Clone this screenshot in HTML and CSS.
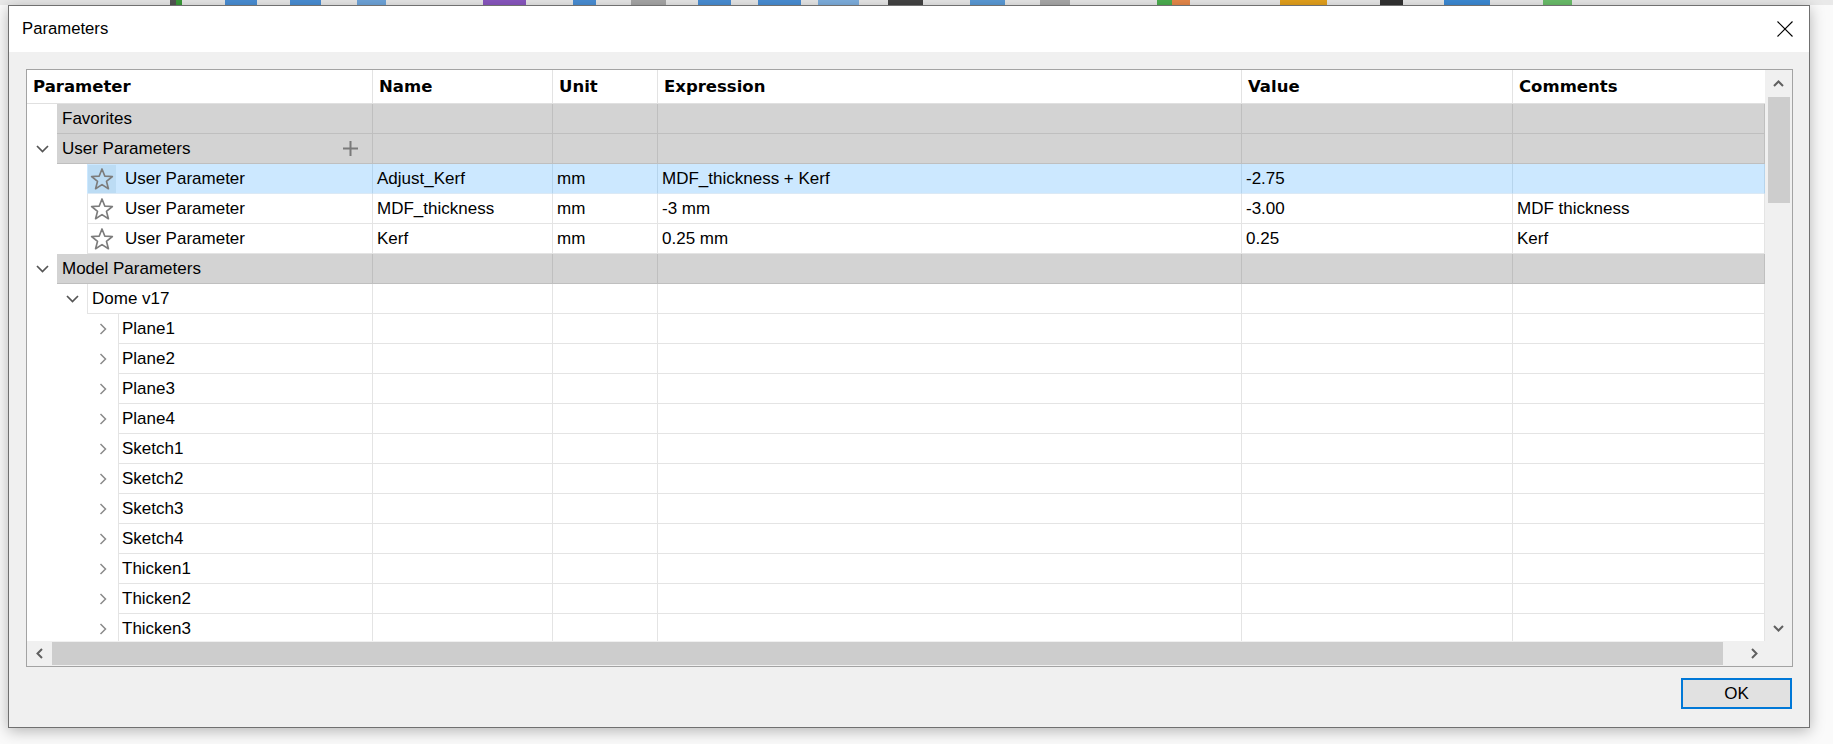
FILE: index.html
```html
<!DOCTYPE html>
<html>
<head>
<meta charset="utf-8">
<title>Parameters</title>
<link rel="stylesheet" href="styles.css">
</head>
<body>
<div class="topstrip"></div>
<div class="dialog">
  <div class="titlebar">
    <span class="title">Parameters</span>
    <svg class="close" width="16" height="16" viewBox="0 0 16 16"><path d="M0.5 0.5 L15.5 15.5 M15.5 0.5 L0.5 15.5" stroke="#000" stroke-width="1.1" fill="none"/></svg>
  </div>
  <div class="dbody">
    <div class="frame">
      <div class="viewport">
        <div class="content">
          <div class="row head">
            <div class="hc w-param">Parameter</div>
            <div class="hc w-name">Name</div>
            <div class="hc w-unit">Unit</div>
            <div class="hc w-expr">Expression</div>
            <div class="hc w-val">Value</div>
            <div class="hc w-com">Comments</div>
          </div>

          <div class="row group">
            <div class="c-param"><div class="indent i1"></div><div class="tbox">Favorites</div></div>
            <div class="cell w-name"></div><div class="cell w-unit"></div><div class="cell w-expr"></div><div class="cell w-val"></div><div class="cell w-com"></div>
          </div>

          <div class="row group">
            <div class="c-param"><div class="indent i1"><span class="chev"><svg width="13" height="8" viewBox="0 0 13 8"><path d="M1 1 L6.5 6.5 L12 1" fill="none" stroke="#555" stroke-width="1.7"/></svg></span></div><div class="tbox">User Parameters<svg class="plus" width="15" height="15" viewBox="0 0 15 15"><path d="M7.5 0 V15 M0 7.5 H15" stroke="#7a7a7a" stroke-width="2"/></svg></div></div>
            <div class="cell w-name"></div><div class="cell w-unit"></div><div class="cell w-expr"></div><div class="cell w-val"></div><div class="cell w-com"></div>
          </div>

          <div class="row leaf sel">
            <div class="c-param"><div class="indent i2"></div><div class="tbox"><span class="starbox"><svg width="24" height="24" viewBox="0 0 22 22"><path d="M11 1.8 L13.53 8.32 L20.51 8.71 L15.09 13.13 L16.88 19.89 L11 16.1 L5.12 19.89 L6.91 13.13 L1.49 8.71 L8.47 8.32 Z" fill="none" stroke="#7c7c7c" stroke-width="1.5" stroke-linejoin="round"/></svg></span><span class="utx">User Parameter</span></div></div>
            <div class="cell w-name">Adjust_Kerf</div><div class="cell w-unit">mm</div><div class="cell w-expr">MDF_thickness + Kerf</div><div class="cell w-val">-2.75</div><div class="cell w-com"></div>
          </div>

          <div class="row leaf">
            <div class="c-param"><div class="indent i2"></div><div class="tbox"><span class="starbox"><svg width="24" height="24" viewBox="0 0 22 22"><path d="M11 1.8 L13.53 8.32 L20.51 8.71 L15.09 13.13 L16.88 19.89 L11 16.1 L5.12 19.89 L6.91 13.13 L1.49 8.71 L8.47 8.32 Z" fill="none" stroke="#7c7c7c" stroke-width="1.5" stroke-linejoin="round"/></svg></span><span class="utx">User Parameter</span></div></div>
            <div class="cell w-name">MDF_thickness</div><div class="cell w-unit">mm</div><div class="cell w-expr">-3 mm</div><div class="cell w-val">-3.00</div><div class="cell w-com">MDF thickness</div>
          </div>

          <div class="row leaf">
            <div class="c-param"><div class="indent i2"></div><div class="tbox"><span class="starbox"><svg width="24" height="24" viewBox="0 0 22 22"><path d="M11 1.8 L13.53 8.32 L20.51 8.71 L15.09 13.13 L16.88 19.89 L11 16.1 L5.12 19.89 L6.91 13.13 L1.49 8.71 L8.47 8.32 Z" fill="none" stroke="#7c7c7c" stroke-width="1.5" stroke-linejoin="round"/></svg></span><span class="utx">User Parameter</span></div></div>
            <div class="cell w-name">Kerf</div><div class="cell w-unit">mm</div><div class="cell w-expr">0.25 mm</div><div class="cell w-val">0.25</div><div class="cell w-com">Kerf</div>
          </div>

          <div class="row group">
            <div class="c-param"><div class="indent i1"><span class="chev"><svg width="13" height="8" viewBox="0 0 13 8"><path d="M1 1 L6.5 6.5 L12 1" fill="none" stroke="#555" stroke-width="1.7"/></svg></span></div><div class="tbox">Model Parameters</div></div>
            <div class="cell w-name"></div><div class="cell w-unit"></div><div class="cell w-expr"></div><div class="cell w-val"></div><div class="cell w-com"></div>
          </div>

          <div class="row leaf">
            <div class="c-param"><div class="indent i2"><span class="chev"><svg width="13" height="8" viewBox="0 0 13 8"><path d="M1 1 L6.5 6.5 L12 1" fill="none" stroke="#555" stroke-width="1.7"/></svg></span></div><div class="tbox">Dome v17</div></div>
            <div class="cell w-name"></div><div class="cell w-unit"></div><div class="cell w-expr"></div><div class="cell w-val"></div><div class="cell w-com"></div>
          </div>

          <div class="row leaf">
            <div class="c-param"><div class="indent i3"><span class="chev"><svg width="8" height="12" viewBox="0 0 8 12"><path d="M1.5 1 L6.5 6 L1.5 11" fill="none" stroke="#8a8a8a" stroke-width="1.5"/></svg></span></div><div class="tbox t3">Plane1</div></div>
            <div class="cell w-name"></div><div class="cell w-unit"></div><div class="cell w-expr"></div><div class="cell w-val"></div><div class="cell w-com"></div>
          </div>
          <div class="row leaf">
            <div class="c-param"><div class="indent i3"><span class="chev"><svg width="8" height="12" viewBox="0 0 8 12"><path d="M1.5 1 L6.5 6 L1.5 11" fill="none" stroke="#8a8a8a" stroke-width="1.5"/></svg></span></div><div class="tbox t3">Plane2</div></div>
            <div class="cell w-name"></div><div class="cell w-unit"></div><div class="cell w-expr"></div><div class="cell w-val"></div><div class="cell w-com"></div>
          </div>
          <div class="row leaf">
            <div class="c-param"><div class="indent i3"><span class="chev"><svg width="8" height="12" viewBox="0 0 8 12"><path d="M1.5 1 L6.5 6 L1.5 11" fill="none" stroke="#8a8a8a" stroke-width="1.5"/></svg></span></div><div class="tbox t3">Plane3</div></div>
            <div class="cell w-name"></div><div class="cell w-unit"></div><div class="cell w-expr"></div><div class="cell w-val"></div><div class="cell w-com"></div>
          </div>
          <div class="row leaf">
            <div class="c-param"><div class="indent i3"><span class="chev"><svg width="8" height="12" viewBox="0 0 8 12"><path d="M1.5 1 L6.5 6 L1.5 11" fill="none" stroke="#8a8a8a" stroke-width="1.5"/></svg></span></div><div class="tbox t3">Plane4</div></div>
            <div class="cell w-name"></div><div class="cell w-unit"></div><div class="cell w-expr"></div><div class="cell w-val"></div><div class="cell w-com"></div>
          </div>
          <div class="row leaf">
            <div class="c-param"><div class="indent i3"><span class="chev"><svg width="8" height="12" viewBox="0 0 8 12"><path d="M1.5 1 L6.5 6 L1.5 11" fill="none" stroke="#8a8a8a" stroke-width="1.5"/></svg></span></div><div class="tbox t3">Sketch1</div></div>
            <div class="cell w-name"></div><div class="cell w-unit"></div><div class="cell w-expr"></div><div class="cell w-val"></div><div class="cell w-com"></div>
          </div>
          <div class="row leaf">
            <div class="c-param"><div class="indent i3"><span class="chev"><svg width="8" height="12" viewBox="0 0 8 12"><path d="M1.5 1 L6.5 6 L1.5 11" fill="none" stroke="#8a8a8a" stroke-width="1.5"/></svg></span></div><div class="tbox t3">Sketch2</div></div>
            <div class="cell w-name"></div><div class="cell w-unit"></div><div class="cell w-expr"></div><div class="cell w-val"></div><div class="cell w-com"></div>
          </div>
          <div class="row leaf">
            <div class="c-param"><div class="indent i3"><span class="chev"><svg width="8" height="12" viewBox="0 0 8 12"><path d="M1.5 1 L6.5 6 L1.5 11" fill="none" stroke="#8a8a8a" stroke-width="1.5"/></svg></span></div><div class="tbox t3">Sketch3</div></div>
            <div class="cell w-name"></div><div class="cell w-unit"></div><div class="cell w-expr"></div><div class="cell w-val"></div><div class="cell w-com"></div>
          </div>
          <div class="row leaf">
            <div class="c-param"><div class="indent i3"><span class="chev"><svg width="8" height="12" viewBox="0 0 8 12"><path d="M1.5 1 L6.5 6 L1.5 11" fill="none" stroke="#8a8a8a" stroke-width="1.5"/></svg></span></div><div class="tbox t3">Sketch4</div></div>
            <div class="cell w-name"></div><div class="cell w-unit"></div><div class="cell w-expr"></div><div class="cell w-val"></div><div class="cell w-com"></div>
          </div>
          <div class="row leaf">
            <div class="c-param"><div class="indent i3"><span class="chev"><svg width="8" height="12" viewBox="0 0 8 12"><path d="M1.5 1 L6.5 6 L1.5 11" fill="none" stroke="#8a8a8a" stroke-width="1.5"/></svg></span></div><div class="tbox t3">Thicken1</div></div>
            <div class="cell w-name"></div><div class="cell w-unit"></div><div class="cell w-expr"></div><div class="cell w-val"></div><div class="cell w-com"></div>
          </div>
          <div class="row leaf">
            <div class="c-param"><div class="indent i3"><span class="chev"><svg width="8" height="12" viewBox="0 0 8 12"><path d="M1.5 1 L6.5 6 L1.5 11" fill="none" stroke="#8a8a8a" stroke-width="1.5"/></svg></span></div><div class="tbox t3">Thicken2</div></div>
            <div class="cell w-name"></div><div class="cell w-unit"></div><div class="cell w-expr"></div><div class="cell w-val"></div><div class="cell w-com"></div>
          </div>
          <div class="row leaf">
            <div class="c-param"><div class="indent i3"><span class="chev"><svg width="8" height="12" viewBox="0 0 8 12"><path d="M1.5 1 L6.5 6 L1.5 11" fill="none" stroke="#8a8a8a" stroke-width="1.5"/></svg></span></div><div class="tbox t3">Thicken3</div></div>
            <div class="cell w-name"></div><div class="cell w-unit"></div><div class="cell w-expr"></div><div class="cell w-val"></div><div class="cell w-com"></div>
          </div>
        </div>
        <div class="vscroll">
          <div class="sarrow"><svg width="11" height="7" viewBox="0 0 11 7"><path d="M1 6 L5.5 1.5 L10 6" fill="none" stroke="#606060" stroke-width="2"/></svg></div>
          <div class="vthumb"></div>
          <div class="vtrack"></div>
          <div class="sarrow"><svg width="11" height="7" viewBox="0 0 11 7"><path d="M1 1 L5.5 5.5 L10 1" fill="none" stroke="#606060" stroke-width="2"/></svg></div>
        </div>
      </div>
      <div class="hscroll">
        <div class="harrow"><svg width="7" height="11" viewBox="0 0 7 11"><path d="M6 1 L1.5 5.5 L6 10" fill="none" stroke="#606060" stroke-width="2"/></svg></div>
        <div class="hthumb"></div>
        <div class="htrack"></div>
        <div class="harrow hr"><svg width="7" height="11" viewBox="0 0 7 11"><path d="M1 1 L5.5 5.5 L1 10" fill="none" stroke="#606060" stroke-width="2"/></svg></div>
        <div class="corner"></div>
      </div>
    </div>
    <div class="footer">
      <button class="ok">OK</button>
    </div>
  </div>
</div>
</body>
</html>
```

FILE: styles.css
```css
* { box-sizing: border-box; }
html, body { margin: 0; padding: 0; }
body {
  width: 1833px;
  height: 744px;
  overflow: hidden;
  background: #fafafa;
  font-family: "Liberation Sans", Arial, sans-serif;
  color: #000;
}
.topstrip {
  height: 5px;
  background: linear-gradient(to right, #e9e9e9 0 170px, #555 170px 176px, #3b9c3b 176px 182px, #e9e9e9 182px 225px, #4a8fd6 225px 257px, #e9e9e9 257px 290px, #4a8fd6 290px 321px, #e9e9e9 321px 357px, #6fa6dc 357px 386px, #e9e9e9 386px 483px, #8a57c1 483px 526px, #e9e9e9 526px 573px, #4a8fd6 573px 596px, #e9e9e9 596px 631px, #a8a8a8 631px 666px, #e9e9e9 666px 698px, #4a8fd6 698px 731px, #e9e9e9 731px 758px, #4a8fd6 758px 801px, #e9e9e9 801px 818px, #7fb0e0 818px 859px, #e9e9e9 859px 888px, #444 888px 923px, #e9e9e9 923px 970px, #5b9bd8 970px 1005px, #e9e9e9 1005px 1040px, #aaa 1040px 1070px, #e9e9e9 1070px 1157px, #4caf50 1157px 1172px, #e8894a 1172px 1190px, #e9e9e9 1190px 1280px, #e5a21c 1280px 1327px, #e9e9e9 1327px 1380px, #333 1380px 1403px, #e9e9e9 1403px 1444px, #3d8bd6 1444px 1490px, #e9e9e9 1490px 1543px, #6bbf6b 1543px 1572px, #e9e9e9 1572px);
}
.dialog {
  margin-left: 8px;
  width: 1802px;
  height: 723px;
  border: 1px solid #707070;
  background: #f0f0f0;
  box-shadow: 0 3px 14px rgba(0, 0, 0, 0.28);
  display: flex;
  flex-direction: column;
}
.titlebar {
  flex: none;
  height: 46px;
  background: #fff;
  display: flex;
  align-items: center;
  justify-content: space-between;
  padding: 0 16px 0 13px;
}
.title { font-size: 16.7px; }
.close { display: block; }
.dbody {
  flex: 1;
  padding: 17px 16px 0 17px;
  display: flex;
  flex-direction: column;
}
.frame {
  height: 598px;
  border: 1px solid #a3a3a3;
  background: #fff;
  display: flex;
  flex-direction: column;
}
.viewport { height: 571px; display: flex; }
.content { width: 1738px; height: 571px; overflow: hidden; flex: none; }

.row { display: flex; height: 30px; font-size: 17px; }
.row.head { height: 34px; }
.hc {
  height: 100%;
  display: flex;
  align-items: center;
  padding-left: 6px;
  font-family: "DejaVu Sans", sans-serif;
  font-weight: bold;
  font-size: 16.5px;
  border-right: 1px solid #e3e3e3;
  border-bottom: 1px solid #e0e0e0;
  white-space: nowrap;
}
.w-param { width: 346px; flex: none; }
.w-name { width: 180px; flex: none; }
.w-unit { width: 105px; flex: none; }
.w-expr { width: 584px; flex: none; }
.w-val { width: 271px; flex: none; }
.w-com { width: 252px; flex: none; border-right: none; }

.cell {
  height: 100%;
  display: flex;
  align-items: center;
  padding-left: 4px;
  white-space: nowrap;
  overflow: hidden;
  border-right: 1px solid #e4e4e4;
  border-bottom: 1px solid #e4e4e4;
}
.c-param { width: 346px; flex: none; height: 100%; display: flex; }
.indent {
  flex: none;
  height: 100%;
  display: flex;
  justify-content: flex-end;
  align-items: center;
}
.i1 { width: 30px; }
.i2 { width: 60px; }
.i3 { width: 91px; }
.chev { width: 30px; display: flex; justify-content: center; align-items: center; }
.chev svg { display: block; }
.tbox {
  flex: 1;
  height: 100%;
  display: flex;
  align-items: center;
  padding-left: 5px;
  white-space: nowrap;
  border-right: 1px solid #e4e4e4;
  border-bottom: 1px solid #e4e4e4;
}
.leaf .tbox { border-left: 1px solid #e4e4e4; padding-left: 4px; }
.leaf .tbox.t3 { padding-left: 3px; }
.plus { margin-left: auto; margin-right: 14px; display: block; }

.group .tbox, .group .cell {
  background: #d3d3d3;
  border-color: #bfbfbf;
}
.group .tbox { border-left: none; }

.starbox {
  width: 28px;
  height: 28px;
  margin-left: -4px;
  display: flex;
  align-items: center;
  justify-content: center;
  flex: none;
}
.starbox svg { display: block; }
.utx { margin-left: 9px; }

.sel .tbox, .sel .cell { background: #cce8ff; border-bottom-color: #dbe9f5; border-right-color: #b6d4ec; }
.sel .tbox { border-left-color: #cce8ff; }
.sel .starbox { background: #bcdcf4; }

.vscroll {
  width: 27px;
  flex: none;
  background: #f0f0f0;
  display: flex;
  flex-direction: column;
}
.sarrow { height: 26px; flex: none; display: flex; align-items: center; justify-content: center; }
.sarrow svg, .harrow svg { display: block; }
.vthumb { height: 106px; margin: 1px 2px 0 3px; background: #cdcdcd; flex: none; }
.vtrack { flex: 1; }

.hscroll { height: 25px; display: flex; background: #f0f0f0; }
.harrow { width: 25px; flex: none; display: flex; align-items: center; justify-content: center; }
.harrow.hr { width: 24px; }
.hthumb { width: 1671px; flex: none; height: 23px; margin-top: 1px; background: #cdcdcd; }
.htrack { flex: 1; }
.corner { width: 26px; flex: none; }

.footer {
  display: flex;
  justify-content: flex-end;
  padding-top: 11px;
  padding-right: 1px;
}
.ok {
  width: 111px;
  height: 31px;
  padding: 0;
  border: 2px solid #0078d7;
  background: #e1e1e1;
  font-family: "Liberation Sans", Arial, sans-serif;
  font-size: 17px;
  color: #000;
}
```
